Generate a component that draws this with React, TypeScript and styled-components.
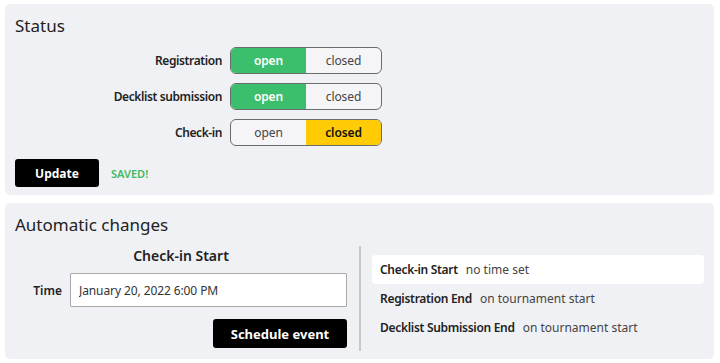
import React from 'react';
import styled, { createGlobalStyle } from 'styled-components';

const GlobalStyle = createGlobalStyle`
  html, body {
    margin: 0;
    padding: 0;
    background: #ffffff;
  }
  body {
    font-family: "Noto Sans", "Open Sans", sans-serif;
    color: #222;
  }
`;

const Page = styled.div`
  display: flex;
  flex-direction: column;
  gap: 8px;
  padding: 4px 6px 6px 5px;
`;

const Panel = styled.section`
  background: #f0f1f5;
  border-radius: 5px;
  padding: 9px 10px 8px 10px;
`;

const Title = styled.h2`
  margin: 0;
  font-size: 17px;
  font-weight: 400;
  line-height: 25px;
  color: #222;
`;

const StatusGrid = styled.div`
  display: grid;
  grid-template-columns: 207px 152px;
  column-gap: 8px;
  row-gap: 9px;
  align-items: center;
  margin-top: 9px;
`;

const RowLabel = styled.span`
  text-align: right;
  font-size: 12px;
  font-weight: 600;
  letter-spacing: -0.4px;
  color: #222;
`;

const Toggle = styled.div`
  display: grid;
  grid-template-columns: 1fr 1fr;
  height: 27px;
  border: 1px solid #6b6b6b;
  border-radius: 6px;
  overflow: hidden;
  box-sizing: border-box;
  background: #f5f5f7;
`;

const Segment = styled.span<{ $active?: 'green' | 'yellow' }>`
  display: flex;
  align-items: center;
  justify-content: center;
  font-size: 12px;
  letter-spacing: -0.1px;
  font-weight: ${p => (p.$active ? 600 : 400)};
  color: ${p => (p.$active === 'green' ? '#ffffff' : p.$active === 'yellow' ? '#111' : '#444')};
  background: ${p => (p.$active === 'green' ? '#3bbf6d' : p.$active === 'yellow' ? '#ffcb05' : 'transparent')};
`;

const Actions = styled.div`
  display: flex;
  align-items: center;
  gap: 12px;
  margin-top: 13px;
`;

const BlackButton = styled.button<{ $width: number; $tall?: boolean }>`
  width: ${p => p.$width}px;
  height: ${p => (p.$tall ? 29 : 28)}px;
  background: #000;
  color: #fff;
  border: none;
  border-radius: 3px;
  font-family: inherit;
  font-size: ${p => (p.$tall ? 13 : 12)}px;
  font-weight: 700;
  padding: 0;
`;

const Saved = styled.span`
  color: #46b865;
  font-size: 11px;
  font-weight: 600;
`;

const AutoGrid = styled.div`
  display: grid;
  grid-template-columns: 332px 2px 1fr;
  column-gap: 12px;
  margin-top: 9px;
`;

const LeftColumn = styled.div`
  display: flex;
  flex-direction: column;
`;

const SubTitle = styled.h3`
  margin: 0;
  text-align: center;
  font-size: 14px;
  font-weight: 600;
  line-height: 20px;
  color: #222;
`;

const FieldRow = styled.div`
  display: grid;
  grid-template-columns: 47px 1fr;
  column-gap: 8px;
  align-items: center;
  margin-top: 7px;
`;

const FieldLabel = styled.label`
  text-align: right;
  font-size: 12px;
  font-weight: 600;
`;

const Input = styled.input`
  height: 34px;
  box-sizing: border-box;
  border: 1px solid #a9a9a9;
  border-radius: 1px;
  background: #fff;
  padding: 0 8px;
  font-family: inherit;
  font-size: 12px;
  letter-spacing: -0.1px;
  color: #333;
  outline: none;
`;

const ButtonRow = styled.div`
  display: flex;
  justify-content: flex-end;
  margin-top: 12px;
  margin-bottom: 3px;
`;

const Divider = styled.div`
  background: #c6c7cb;
  width: 2px;
`;

const EventList = styled.div`
  display: flex;
  flex-direction: column;
  justify-content: center;
  margin-left: -1px;
`;

const EventRow = styled.div<{ $highlight?: boolean }>`
  display: flex;
  align-items: center;
  gap: 8px;
  height: 29px;
  padding: 0 8px;
  border-radius: 4px;
  background: ${p => (p.$highlight ? '#ffffff' : 'transparent')};
  font-size: 12px;
`;

const EventName = styled.span`
  font-weight: 600;
  letter-spacing: -0.3px;
  color: #222;
`;

const EventWhen = styled.span`
  color: #444;
`;

const statusRows: { label: string; open: boolean }[] = [
  { label: 'Registration', open: true },
  { label: 'Decklist submission', open: true },
  { label: 'Check-in', open: false },
];

const events = [
  { name: 'Check-in Start', when: 'no time set', highlight: true },
  { name: 'Registration End', when: 'on tournament start' },
  { name: 'Decklist Submission End', when: 'on tournament start' },
];

export default function App() {
  return (
    <>
      <GlobalStyle />
      <Page>
        <Panel>
          <Title>Status</Title>
          <StatusGrid>
            {statusRows.map(row => (
              <React.Fragment key={row.label}>
                <RowLabel>{row.label}</RowLabel>
                <Toggle>
                  <Segment $active={row.open ? 'green' : undefined}>open</Segment>
                  <Segment $active={row.open ? undefined : 'yellow'}>closed</Segment>
                </Toggle>
              </React.Fragment>
            ))}
          </StatusGrid>
          <Actions>
            <BlackButton $width={84}>Update</BlackButton>
            <Saved>SAVED!</Saved>
          </Actions>
        </Panel>

        <Panel>
          <Title>Automatic changes</Title>
          <AutoGrid>
            <LeftColumn>
              <SubTitle>Check-in Start</SubTitle>
              <FieldRow>
                <FieldLabel>Time</FieldLabel>
                <Input defaultValue="January 20, 2022 6:00 PM" />
              </FieldRow>
              <ButtonRow>
                <BlackButton $width={134} $tall>Schedule event</BlackButton>
              </ButtonRow>
            </LeftColumn>
            <Divider />
            <EventList>
              {events.map(ev => (
                <EventRow key={ev.name} $highlight={ev.highlight}>
                  <EventName>{ev.name}</EventName>
                  <EventWhen>{ev.when}</EventWhen>
                </EventRow>
              ))}
            </EventList>
          </AutoGrid>
        </Panel>
      </Page>
    </>
  );
}
